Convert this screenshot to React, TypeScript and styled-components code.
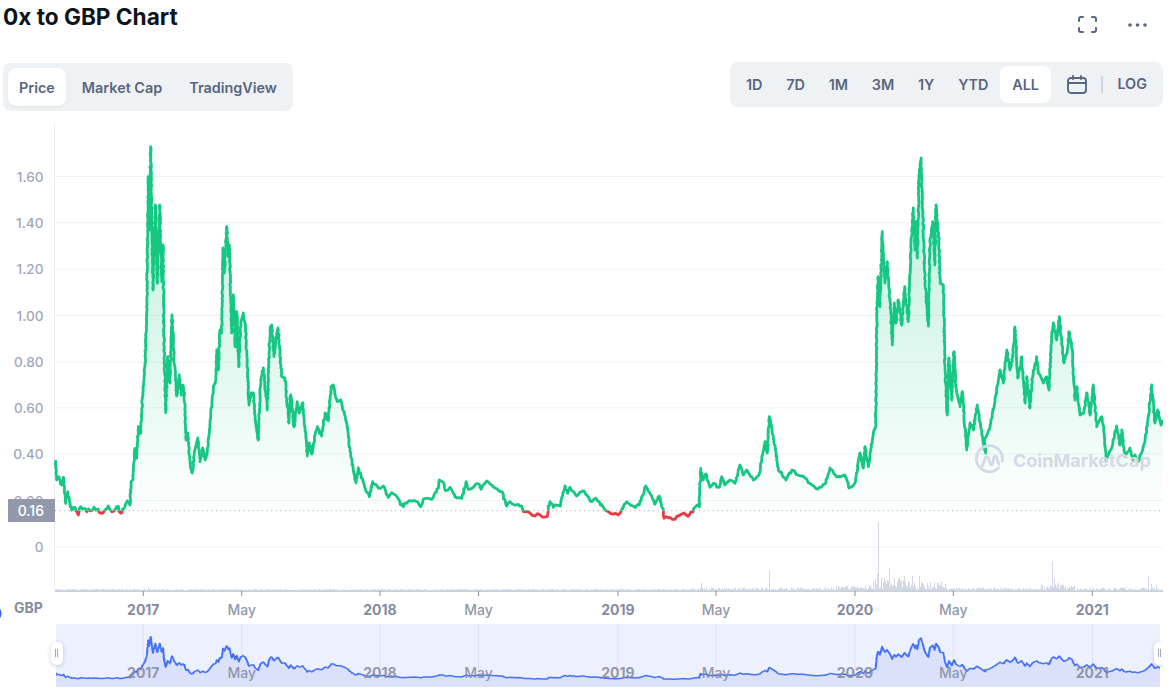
import React from "react";
import styled, { createGlobalStyle } from "styled-components";

const GlobalStyle = createGlobalStyle`
  html, body {
    margin: 0;
    padding: 0;
    background: #fff;
    font-family: Inter, "Liberation Sans", sans-serif;
  }
`;

// traced price line, in page pixels
const TRACE: [number, number][] = [
  [55.3, 460], [56.7, 480], [59, 476.7], [61.7, 485], [63.3, 477.3], [65.7, 503.3], [67.7, 491.7], [70, 503],
  [71.7, 510], [75, 507.3], [78.3, 515], [80.7, 506.7], [86.7, 511.7], [94, 507.3], [101.7, 513.3], [108.3, 506],
  [111.7, 511.7], [116.7, 506.7], [121.7, 513], [127.3, 500.7], [130, 505], [131, 481.7], [132.7, 480], [135, 448.3],
  [136.7, 458.3], [138.3, 426.7], [140.7, 433.3], [142.7, 393.3], [145, 363], [146.7, 313], [148.3, 176.7], [149.3, 230],
  [150.7, 146.7], [153, 290], [155.3, 205], [157.3, 283.3], [159.7, 205], [161.7, 281.7], [163, 245], [164, 336.7],
  [165.7, 412.7], [167.7, 356.7], [170, 383], [172, 315], [174, 356.7], [176.7, 396], [179.3, 375], [181.3, 395],
  [182.7, 385], [184.3, 395], [186, 440], [188, 433], [190, 463], [192.3, 473], [195, 450], [197.7, 438],
  [200, 461.7], [202.7, 448], [205, 460], [207.3, 451.7], [210.7, 416.7], [213.3, 386.7], [215.7, 380], [216.7, 350],
  [218.3, 370], [220, 330], [221.7, 333], [223, 248], [224.3, 273], [226.7, 226.7], [228.3, 256.7], [229.3, 245],
  [231.7, 333], [233.3, 295], [235.3, 346.7], [236.7, 311.7], [238.7, 366.7], [240.7, 323], [243.3, 313], [245.7, 330],
  [249, 405], [251, 393], [253.3, 393], [255.7, 423], [258.3, 440], [260.7, 380], [263.3, 368], [267.3, 410],
  [270, 330], [271.7, 325], [274, 356.7], [275.7, 340], [278, 328], [281.7, 376.7], [285, 378], [289, 423],
  [290.7, 395], [294, 426.7], [297.3, 401.7], [299.3, 413], [302.7, 402.7], [307.3, 456], [309.3, 443], [311.7, 454],
  [315, 435], [317.3, 426.7], [321.7, 436], [325, 413], [328.3, 420.7], [331, 386.7], [333.3, 385], [337.3, 401.7],
  [340.7, 400], [346.7, 423], [349.3, 446.7], [353.3, 470], [356, 483], [358.3, 468], [365, 488], [369.3, 496.7],
  [372.7, 481.7], [378.3, 488], [383.3, 486], [388.3, 497.5], [391.7, 492.7], [395.7, 495], [403.3, 506.7], [406.7, 503.3],
  [411.7, 501], [416.7, 501.7], [420.7, 506.7], [423.3, 499], [431.7, 499.3], [438.3, 488.3], [439.3, 480], [443.3, 482.3],
  [445.7, 490.7], [450, 487.3], [455, 496.7], [461.7, 498.3], [466, 481.7], [468.3, 489.3], [475, 485], [479, 484],
  [481, 489.3], [486.7, 481], [491.7, 485], [501.7, 491.7], [506.7, 506], [510, 501.7], [518.3, 504.3], [525, 511.7],
  [530, 513], [535, 516], [540, 515], [546.7, 516.7], [550, 501.7], [553.3, 507.3], [560, 506], [565, 486],
  [567.7, 493.3], [570, 487.3], [576.7, 496], [583.3, 490.7], [591.7, 501.7], [596, 498.3], [603.3, 507.3], [608.3, 511.7],
  [613.3, 514], [618.3, 515], [626.7, 501.7], [633.3, 506], [639.3, 505], [645.7, 486], [651.7, 496], [655, 504],
  [659.3, 496], [663.3, 510], [664, 518.3], [668, 517.5], [675, 519.3], [681.7, 514], [690, 514], [695, 507.3],
  [699.3, 506.7], [700.7, 468.3], [703.3, 480], [705.7, 474], [710, 487.3], [713.3, 483.3], [719.3, 487.3], [721.7, 476.7],
  [725, 485], [730, 480], [735, 483.3], [740, 465], [743.3, 475], [746.7, 470], [753.3, 480], [759, 475],
  [761.7, 460], [765, 441.7], [767.3, 453], [769.3, 416.7], [773.3, 436.7], [778.3, 470], [786, 480], [792, 470],
  [798, 475], [805, 478], [812, 485], [818, 489], [825, 484], [830, 468], [836.7, 477], [845, 475],
  [849, 488], [855, 483], [860, 453], [863.3, 468], [865, 446.7], [868.3, 466.7], [873.3, 433], [875.7, 426.7],
  [877, 306.7], [878.3, 276.7], [880, 306.7], [882.3, 231.7], [885, 283], [887.3, 261.7], [890.7, 313], [892.3, 345],
  [894.3, 303], [896, 323], [898.3, 300], [901.7, 325], [904.7, 286.7], [908.3, 321.7], [911, 243], [913.3, 208],
  [915, 250], [916, 221.7], [917.3, 258], [919, 178], [921, 158], [922.3, 200], [925, 280], [928.3, 326],
  [930, 243], [932.7, 221.7], [934.7, 265], [936, 205], [939, 240], [940, 283], [943.3, 285], [945, 366.7],
  [945.7, 383], [947.3, 415], [949, 358], [951.7, 400], [954, 351.7], [956, 388], [960, 406.7], [962.3, 391.7],
  [966.7, 450], [970, 423], [973.3, 430], [977.3, 405], [983.3, 443], [985.7, 453], [984.3, 441.7], [990, 426.7],
  [995, 400], [1000, 370], [1003.3, 383], [1006.7, 350], [1010, 370], [1012.7, 356.7], [1015, 327], [1017.7, 378],
  [1021.7, 356.7], [1025, 403], [1026.7, 376.7], [1030, 408], [1032.3, 378], [1036.7, 356.7], [1038.3, 373], [1043.3, 383],
  [1046.7, 376.7], [1049, 390], [1051.7, 336.7], [1053.3, 323], [1056.7, 340], [1059.3, 316.7], [1062.7, 350], [1064, 363],
  [1067.3, 350], [1069, 331.7], [1071.7, 343], [1075, 400], [1076.7, 386.7], [1080, 415], [1084, 413], [1086.7, 393],
  [1090, 415], [1093.3, 385], [1096.7, 426.7], [1101.7, 416.7], [1104, 433], [1106, 460], [1111.7, 448], [1116.7, 426],
  [1120, 445], [1121.7, 430], [1125, 456.7], [1130, 448], [1132.7, 460], [1135, 455], [1138.3, 461.7], [1145, 441.7],
  [1148.3, 416.7], [1151.7, 385], [1155, 423], [1157.7, 410], [1161, 425], [1162.7, 420],
];

const noise = (n: number) => (Math.abs(Math.sin(n * 12.9898) * 43758.5453) % 1) * 2 - 1;

// the real series is daily, so fill the trace in with a bit of day-to-day wobble
const addWobble = (pts: [number, number][]) => {
  const out: [number, number][] = [];
  pts.forEach(([x, y], i) => {
    out.push([x, y]);
    const next = pts[i + 1];
    if (!next) return;
    const steps = Math.floor(Math.hypot(next[0] - x, next[1] - y) / 2);
    for (let s = 1; s < steps; s++) {
      const t = s / steps;
      const k = i * 31 + s;
      const py = y + (next[1] - y) * t;
      const amp = py > 498 ? 2.2 : 1.3;
      out.push([x + (next[0] - x) * t + noise(k) * 0.5, py + noise(k + 0.5) * amp]);
    }
  });
  return out;
};

const PRICE = addWobble(TRACE);

const BASE_Y = 510.7;
const toPoints = (pts: [number, number][]) => pts.map(([x, y]) => `${x.toFixed(1)},${y.toFixed(1)}`).join(" ");

const priceLine = toPoints(PRICE);
const priceArea = `55.3,${BASE_Y} ${priceLine} 1162.7,${BASE_Y}`;

const navPts = PRICE.map(([x, y]): [number, number] => [x, 636.7 + (y - 146.7) * 0.1143]);
const navLine = toPoints(navPts);
const navArea = `55.3,687 ${navLine} 1162.7,687`;

const GRID = [
  { y: 176.5, label: "1.60" },
  { y: 222.7, label: "1.40" },
  { y: 269.2, label: "1.20" },
  { y: 315.5, label: "1.00" },
  { y: 362, label: "0.80" },
  { y: 407.8, label: "0.60" },
  { y: 454, label: "0.40" },
  { y: 500.7, label: "0.20" },
  { y: 547.2, label: "0" },
];

const TICKS = [
  { x: 143.3, label: "2017", strong: true },
  { x: 241.7, label: "May", strong: false },
  { x: 380, label: "2018", strong: true },
  { x: 478.5, label: "May", strong: false },
  { x: 618, label: "2019", strong: true },
  { x: 716, label: "May", strong: false },
  { x: 855, label: "2020", strong: true },
  { x: 953.3, label: "May", strong: false },
  { x: 1092.3, label: "2021", strong: true },
];

const PEAKS: Record<number, number> = {
  148: 587, 701: 583, 769: 570, 878: 522, 877: 574, 881: 577, 884: 578, 889: 568, 904: 576, 912: 576, 919: 576,
  930: 582, 1052: 561, 1054: 579, 1058: 583, 1148: 576, 1151: 584, 1156: 585,
};

const volumeHeight = (x: number) => {
  const r = (noise(x) + 1) / 2;
  let max = 1.5;
  if (x > 690) max = 3;
  if (x > 830) max = 5;
  if (x > 872) max = 13;
  if (x > 905) max = 9;
  if (x > 945) max = 3;
  if (x > 1040 && x < 1075) max = 6;
  if (x > 1075) max = 3;
  return 0.6 + r * max;
};

const VOLUME = Array.from({ length: 1108 }, (_, i) => {
  const x = 55 + i;
  return { x, top: PEAKS[x] ?? 591 - volumeHeight(x) };
});

const RANGES = ["1D", "7D", "1M", "3M", "1Y", "YTD", "ALL"];

const App: React.FC = () => (
  <Page>
    <GlobalStyle />
    <Header>
      <Title>0x to GBP Chart</Title>
      <HeaderIcons>
        <svg width="19" height="17" viewBox="0 0 19 17" fill="none" stroke="#58667e" strokeWidth="2" strokeLinecap="round">
          <path d="M1 5V3a2 2 0 0 1 2-2h2M14 1h2a2 2 0 0 1 2 2v2M18 12v2a2 2 0 0 1-2 2h-2M5 16H3a2 2 0 0 1-2-2v-2" />
        </svg>
        <svg width="19" height="4" viewBox="0 0 19 4" fill="#58667e">
          <circle cx="2" cy="2" r="1.8" />
          <circle cx="9.5" cy="2" r="1.8" />
          <circle cx="17" cy="2" r="1.8" />
        </svg>
      </HeaderIcons>
    </Header>
    <Toolbar>
      <TabPanel>
        <Tab $active>Price</Tab>
        <Tab>Market Cap</Tab>
        <Tab>TradingView</Tab>
      </TabPanel>
      <RangePanel>
        {RANGES.map((r) => (
          <RangeButton key={r} $active={r === "ALL"}>
            {r}
          </RangeButton>
        ))}
        <CalendarButton>
          <svg width="20" height="19" viewBox="0 0 20 19" fill="none" stroke="#58667e" strokeWidth="1.9" strokeLinecap="round">
            <rect x="1" y="3" width="18" height="15" rx="3" />
            <path d="M1 8h18M6 1v3M14 1v3" />
          </svg>
        </CalendarButton>
        <Divider />
        <LogButton>LOG</LogButton>
      </RangePanel>
    </Toolbar>
    <ChartSvg viewBox="0 124 1173 500">
      <defs>
        <linearGradient id="priceFill" gradientUnits="userSpaceOnUse" x1="0" y1="146" x2="0" y2="511">
          <stop offset="0" stopColor="#16c784" stopOpacity="0.3" />
          <stop offset="1" stopColor="#16c784" stopOpacity="0.01" />
        </linearGradient>
        <clipPath id="aboveBase">
          <rect x="0" y="124" width="1163" height={BASE_Y - 124} />
        </clipPath>
        <clipPath id="belowBase">
          <rect x="0" y={BASE_Y} width="1163" height="60" />
        </clipPath>
      </defs>
      <line x1="54.5" y1="124" x2="54.5" y2="591" stroke="#e8ecf3" />
      {GRID.map((g) => (
        <React.Fragment key={g.label}>
          <line x1="55" y1={g.y} x2="1163" y2={g.y} stroke="#eff2f5" />
          <YLabel x="43.5" y={g.y + 5}>
            {g.label}
          </YLabel>
        </React.Fragment>
      ))}
      {VOLUME.map((v) => (
        <line key={v.x} x1={v.x + 0.5} y1={v.top} x2={v.x + 0.5} y2="591" stroke="#d3d8e4" />
      ))}
      <line x1="55" y1="591.2" x2="1163" y2="591.2" stroke="#c8cfdd" strokeWidth="1.4" />
      {TICKS.map((t) => (
        <React.Fragment key={t.x}>
          <line x1={t.x} y1="591" x2={t.x} y2="596" stroke="#858ca2" />
          <XLabel x={t.x} y="615" $strong={t.strong}>
            {t.label}
          </XLabel>
        </React.Fragment>
      ))}
      <polygon points={priceArea} fill="url(#priceFill)" clipPath="url(#aboveBase)" />
      <polyline points={priceLine} fill="none" stroke="#16c784" strokeWidth="2.8" strokeLinejoin="round" clipPath="url(#aboveBase)" />
      <polyline points={priceLine} fill="none" stroke="#ea3943" strokeWidth="2.8" strokeLinejoin="round" clipPath="url(#belowBase)" />
      <line x1="55" y1={BASE_Y} x2="1163" y2={BASE_Y} stroke="#a1a7bb" strokeDasharray="1 3.6" />
      <rect x="8" y="499" width="47" height="23" fill="#9299ab" />
      <BadgeText x="44" y="515.5">0.16</BadgeText>
      <g fill="none" stroke="#d5d9e6" strokeWidth="2.8" strokeLinecap="round" strokeLinejoin="round">
        <path d="M1002.2 461A13 13 0 1 0 998.5 468" />
        <path d="M982.5 466L985.5 457.5Q986.8 455 988 457.5L990.5 464Q991.5 466 992.5 464L994 457.5Q995.3 455 996.5 457.5L999 464.5" />
      </g>
      <Watermark x="1013" y="466.5">CoinMarketCap</Watermark>
      <circle cx="-7" cy="613.5" r="8.5" fill="#3861fb" />
      <GbpLabel x="14" y="613">GBP</GbpLabel>
    </ChartSvg>
    <Navigator>
      <NavSvg viewBox="0 624 1163 63">
        <defs>
          <clipPath id="navPlot">
            <rect x="56" y="624" width="1104" height="63" />
          </clipPath>
        </defs>
        <rect x="56" y="624" width="1104" height="63" fill="#edf0fe" />
        {TICKS.map((t) => (
          <line key={t.x} x1={t.x} y1="624" x2={t.x} y2="687" stroke="#dde1f2" />
        ))}
        <g clipPath="url(#navPlot)">
          <polygon points={navArea} fill="#dbe1fb" />
          <polyline points={navLine} fill="none" stroke="#4372f8" strokeWidth="1.5" strokeLinejoin="round" />
        </g>
        {TICKS.map((t) => (
          <NavLabel key={t.x} x={t.x} y="678" $strong={t.strong}>
            {t.label}
          </NavLabel>
        ))}
      </NavSvg>
      <Handle $side="left" />
      <Handle $side="right" />
    </Navigator>
  </Page>
);

export default App;

const Page = styled.div`
  width: 1173px;
  height: 690px;
  overflow: hidden;
  background: #fff;
  display: flex;
  flex-direction: column;
`;

const Header = styled.div`
  height: 62px;
  display: flex;
  justify-content: space-between;
  align-items: flex-start;
  padding: 0 26px 0 3px;
`;

const Title = styled.h2`
  margin: 0;
  font-size: 22.6px;
  line-height: 34px;
  font-weight: 700;
  color: #0d1421;
`;

const HeaderIcons = styled.div`
  display: flex;
  align-items: center;
  gap: 31px;
  height: 17px;
  margin-top: 16px;
`;

const Toolbar = styled.div`
  height: 62px;
  display: flex;
  justify-content: space-between;
  align-items: flex-start;
  padding: 0 10px 0 3px;
`;

const TabPanel = styled.div`
  display: flex;
  gap: 5px;
  height: 38px;
  margin-top: 1px;
  padding: 5px;
  background: #eff2f5;
  border-radius: 8px;
`;

const Tab = styled.div<{ $active?: boolean }>`
  display: flex;
  align-items: center;
  padding: 0 11px;
  border-radius: 8px;
  font-size: 14.4px;
  font-weight: 600;
  color: #58667e;
  background: ${(p) => (p.$active ? "#fff" : "transparent")};
  box-shadow: ${(p) => (p.$active ? "0 1px 2px rgba(128,138,157,0.15)" : "none")};
`;

const RangePanel = styled.div`
  display: flex;
  align-items: center;
  width: 433px;
  height: 45px;
  box-sizing: border-box;
  padding: 0 4px;
  background: #eff2f5;
  border-radius: 8px;
`;

const RangeButton = styled.div<{ $active?: boolean }>`
  display: flex;
  align-items: center;
  height: 37px;
  padding: 0 11.9px;
  border-radius: 8px;
  font-size: 14.4px;
  font-weight: 600;
  color: #58667e;
  background: ${(p) => (p.$active ? "#fff" : "transparent")};
`;

const CalendarButton = styled.div`
  display: flex;
  margin-left: 16px;
`;

const Divider = styled.div`
  width: 1.5px;
  height: 17px;
  margin: 0 14.5px;
  background: #cfd6e4;
`;

const LogButton = styled.div`
  font-size: 14.4px;
  font-weight: 600;
  color: #58667e;
  margin-top: -3px;
`;

const ChartSvg = styled.svg`
  display: block;
  width: 1173px;
  height: 500px;
  flex: none;
`;

const YLabel = styled.text`
  font-family: Inter, "Liberation Sans", sans-serif;
  font-size: 13.6px;
  font-weight: 500;
  fill: #a1a7bb;
  text-anchor: end;
`;

const XLabel = styled.text<{ $strong: boolean }>`
  font-family: Inter, "Liberation Sans", sans-serif;
  font-size: 14px;
  font-weight: ${(p) => (p.$strong ? 700 : 500)};
  fill: ${(p) => (p.$strong ? "#858ca2" : "#9097aa")};
  text-anchor: middle;
`;

const GbpLabel = styled.text`
  font-family: Inter, "Liberation Sans", sans-serif;
  font-size: 14px;
  font-weight: 700;
  fill: #858ca2;
`;

const BadgeText = styled.text`
  font-family: Inter, "Liberation Sans", sans-serif;
  font-size: 14px;
  font-weight: 500;
  fill: #fff;
  text-anchor: end;
`;

const Watermark = styled.text`
  font-family: Inter, "Liberation Sans", sans-serif;
  font-size: 18px;
  font-weight: 700;
  fill: #d5d9e6;
`;

const Navigator = styled.div`
  position: relative;
  width: 1163px;
  height: 63px;
  overflow: hidden;
  flex: none;
`;

const NavSvg = styled.svg`
  display: block;
  width: 1163px;
  height: 63px;
`;

const NavLabel = styled.text<{ $strong: boolean }>`
  font-family: Inter, "Liberation Sans", sans-serif;
  font-size: 14px;
  font-weight: ${(p) => (p.$strong ? 700 : 500)};
  fill: #858ca2;
  fill-opacity: 0.9;
  text-anchor: middle;
`;

const Handle = styled.div<{ $side: "left" | "right" }>`
  position: absolute;
  top: 18px;
  left: ${(p) => (p.$side === "left" ? "51px" : "1154px")};
  width: 12px;
  height: 23px;
  box-sizing: border-box;
  background: #fff;
  border-radius: 5px;
  box-shadow: 0 1px 4px rgba(88, 102, 126, 0.3);

  &::after {
    content: "";
    position: absolute;
    left: 4px;
    top: 7px;
    width: 3px;
    height: 8px;
    border-left: 1px solid #a1a7bb;
    border-right: 1px solid #a1a7bb;
    box-sizing: border-box;
  }
`;
